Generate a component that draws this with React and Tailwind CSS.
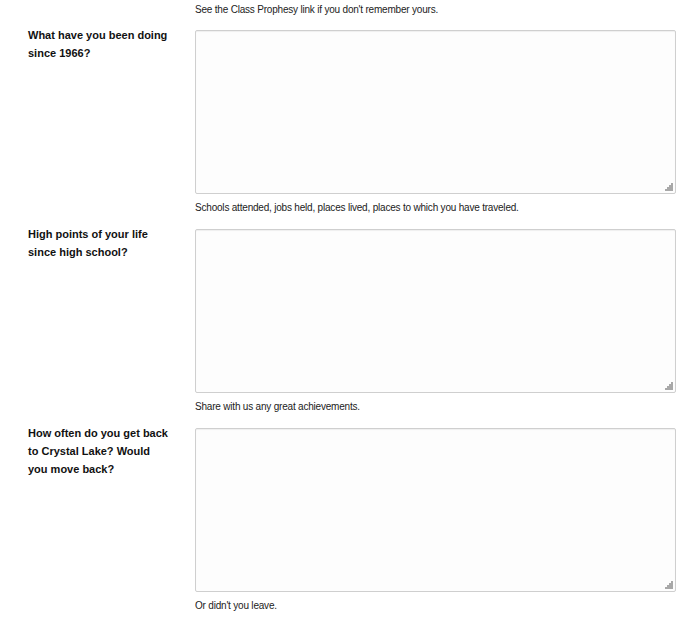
import React from 'react';

const questions = [
    {
        label: 'What have you been doing since 1966?',
        help: 'Schools attended, jobs held, places lived, places to which you have traveled.',
    },
    {
        label: 'High points of your life since high school?',
        help: 'Share with us any great achievements.',
    },
    {
        label: 'How often do you get back to Crystal Lake? Would you move back?',
        help: "Or didn't you leave.",
    },
];

// dotted resize grip like old browsers draw it
const Grip = () => (
    <svg className="absolute right-[3px] bottom-[3px]" width="8" height="8" viewBox="0 0 8 8">
        <g fill="#a8a8a8">
            <rect x="6" y="0" width="2" height="2" />
            <rect x="4" y="2" width="2" height="2" />
            <rect x="6" y="2" width="2" height="2" />
            <rect x="2" y="4" width="2" height="2" />
            <rect x="4" y="4" width="2" height="2" />
            <rect x="6" y="4" width="2" height="2" />
            <rect x="0" y="6" width="2" height="2" />
            <rect x="2" y="6" width="2" height="2" />
            <rect x="4" y="6" width="2" height="2" />
            <rect x="6" y="6" width="2" height="2" />
        </g>
    </svg>
);

const App = () => {
    return (
        <div className="min-h-[622px] bg-white text-[#111] font-['Liberation_Sans',Arial,sans-serif]">
            <div className="pl-[195px] pt-[3px] h-[30px] text-[10px] leading-[13px] text-[#222] tracking-[-0.2px]">
                See the Class Prophesy link if you don't remember yours.
            </div>
            {questions.map((q) => (
                <div key={q.label} className="flex h-[199px]">
                    <label className="w-[195px] shrink-0 pl-[28px] pr-[24px] -mt-[4px] text-[11px] leading-[18px] font-bold">
                        {q.label}
                    </label>
                    <div className="flex flex-col">
                        <div className="relative">
                            <textarea
                                className="block w-[481px] h-[164px] resize-none rounded-[2px] border border-[#cfcfcf] bg-[#fdfdfd] shadow-[inset_0_1px_1px_rgba(0,0,0,0.06)] outline-none"
                            />
                            <Grip />
                        </div>
                        <p className="pt-[7px] text-[10px] leading-[13px] text-[#222] tracking-[-0.2px]">
                            {q.help}
                        </p>
                    </div>
                </div>
            ))}
        </div>
    );
};

export default App;
